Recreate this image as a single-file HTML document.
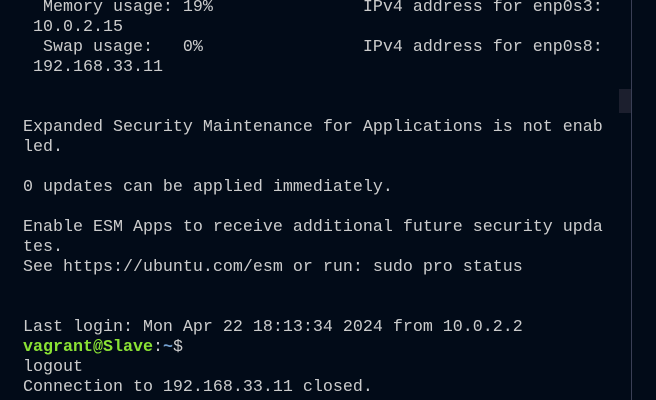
<!DOCTYPE html>
<html><head><style>
html,body{margin:0;padding:0;background:#020b18;width:656px;height:400px;overflow:hidden}
pre{position:absolute;left:23px;top:-2px;margin:0;font-family:"Liberation Mono",monospace;font-size:16.67px;line-height:20px;color:#cccccc;white-space:pre}
.g{color:#8ae234;font-weight:bold}.b{color:#729fcf;font-weight:bold}
.sep{position:absolute;left:631px;top:0;width:1px;height:400px;background:#3a3f55}
.thumb{position:absolute;left:619px;top:89px;width:12px;height:24px;background:#1c1f2e}
</style></head><body>
<pre>  Memory usage: 19%               IPv4 address for enp0s3:
 10.0.2.15
  Swap usage:   0%                IPv4 address for enp0s8:
 192.168.33.11


Expanded Security Maintenance for Applications is not enab
led.

0 updates can be applied immediately.

Enable ESM Apps to receive additional future security upda
tes.
See https://ubuntu.com/esm or run: sudo pro status


Last login: Mon Apr 22 18:13:34 2024 from 10.0.2.2
<span class="g">vagrant@Slave</span>:<span class="b">~</span>$
logout
Connection to 192.168.33.11 closed.</pre>
<div class="sep"></div><div class="thumb"></div>
</body></html>
